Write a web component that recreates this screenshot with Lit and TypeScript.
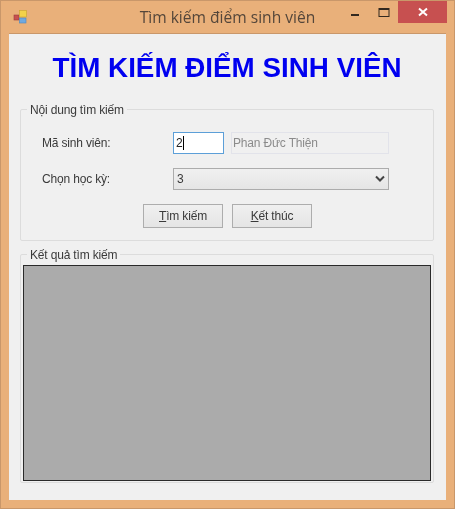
import { LitElement, html, css } from "lit";
import { customElement } from "lit/decorators.js";

@customElement("app-root")
export class AppRoot extends LitElement {
  static styles = css`
    :host {
      display: block;
      width: 455px;
      height: 509px;
      font-family: "Liberation Sans", Arial, sans-serif;
      font-size: 12px;
      letter-spacing: -0.17px;
      color: #3a3a3a;
    }
    .window {
      box-sizing: border-box;
      width: 455px;
      height: 509px;
      background: #e9b07a;
      border: 1px solid #c9976a;
      display: flex;
      flex-direction: column;
      padding: 0 8px 8px 8px;
      filter: blur(0.3px);
    }
    .titlebar {
      height: 32px;
      flex: none;
      position: relative;
    }
    .appicon {
      position: absolute;
      left: 4px;
      top: 8px;
    }
    .caption {
      text-align: center;
      font-family: "Open Sans", "Noto Sans", sans-serif;
      font-size: 15.6px;
      letter-spacing: 0;
      line-height: 18px;
      padding-top: 7px;
      color: #54463a;
    }
    .controls {
      position: absolute;
      right: -1px;
      top: 0;
      display: flex;
      align-items: flex-start;
    }
    .ctl {
      width: 29px;
      height: 24px;
      display: flex;
      align-items: center;
      justify-content: center;
    }
    .close {
      width: 49px;
      height: 22px;
      background: #c75050;
    }
    .client {
      flex: 1;
      background: #f0f0f0;
      border-top: 1px solid #c9976a;
      display: flex;
      flex-direction: column;
      padding: 0 12px 17px 11px;
      min-height: 0;
    }
    h1 {
      margin: 0;
      height: 67px;
      flex: none;
      font-size: 27.8px;
      letter-spacing: 0;
      line-height: 67px;
      font-weight: 700;
      color: #0000f0;
      text-align: center;
      white-space: nowrap;
    }
    fieldset {
      margin: 0;
      padding: 0;
      border: 1px solid #dcdcdc;
      border-radius: 2px;
      min-width: 0;
    }
    legend {
      margin-left: 6px;
      padding: 2px 3px 0;
      line-height: 14px;
    }
    .search {
      height: 140px;
      box-sizing: border-box;
      flex: none;
    }
    .search-body {
      padding: 15px 44px 0 21px;
      display: flex;
      flex-direction: column;
      gap: 14px;
    }
    .row {
      display: flex;
      align-items: center;
      height: 22px;
    }
    .label {
      width: 131px;
      flex: none;
    }
    .input {
      box-sizing: border-box;
      height: 22px;
      line-height: 20px;
      padding-left: 1px;
      border: 1px solid #e2e3ea;
      background: #f0f0f0;
      color: #8b8b8b;
    }
    .code {
      width: 51px;
      padding-left: 2px;
      border: 1px solid #5c9fd8;
      background: #fff;
      color: #222;
      display: flex;
      align-items: center;
    }
    .caret {
      width: 1px;
      height: 14px;
      background: #000;
    }
    .name {
      width: 158px;
      margin-left: 7px;
    }
    .select {
      box-sizing: border-box;
      width: 217px;
      height: 22px;
      border: 1px solid #acacac;
      background: linear-gradient(#f0f0f0, #e5e5e5);
      display: flex;
      align-items: center;
      justify-content: space-between;
      padding: 0 3px 0 3px;
    }
    .buttons {
      display: flex;
      gap: 9px;
      padding-left: 101px;
    }
    button {
      box-sizing: border-box;
      width: 80px;
      height: 24px;
      border: 1px solid #adadad;
      background: linear-gradient(#f0f0f0, #e5e5e5);
      font: inherit;
      letter-spacing: inherit;
      color: inherit;
      padding: 0;
    }
    .results {
      flex: 1;
      margin-top: 5px;
      min-height: 0;
      display: flex;
      flex-direction: column;
    }
    .results-body {
      flex: 1;
      display: flex;
      padding: 3px 2px 1px 2px;
      min-height: 0;
    }
    .grid {
      flex: 1;
      background: #ababab;
      border: 1px solid #2a2a2a;
    }
  `;

  render() {
    return html`
      <div class="window">
        <div class="titlebar">
          <svg class="appicon" width="16" height="16" viewBox="0 0 16 16">
            <rect x="1" y="6" width="5" height="5" fill="#c8504f" stroke="#9c3c3c" stroke-width=".6" />
            <rect x="6.5" y="1.5" width="7" height="6.5" fill="#f3d24a" stroke="#c9a52c" stroke-width=".6" />
            <rect x="6.5" y="9" width="6.5" height="5" fill="#6fa9e0" stroke="#4f86bd" stroke-width=".6" />
          </svg>
          <div class="caption">Tìm kiếm điểm sinh viên</div>
          <div class="controls">
            <div class="ctl">
              <svg width="10" height="10" viewBox="0 0 10 10"><rect x="1" y="6" width="8" height="2" fill="#33291f" /></svg>
            </div>
            <div class="ctl">
              <svg width="12" height="12" viewBox="0 0 12 12">
                <rect x="1" y="1.5" width="10" height="8" fill="none" stroke="#33291f" stroke-width="1" />
                <rect x="1" y="1" width="10" height="2" fill="#33291f" />
              </svg>
            </div>
            <div class="ctl close">
              <svg width="10" height="10" viewBox="0 0 10 10">
                <path d="M1 1.5 L9 8.5 M9 1.5 L1 8.5" stroke="#fff" stroke-width="2" />
              </svg>
            </div>
          </div>
        </div>
        <div class="client">
          <h1>TÌM KIẾM ĐIỂM SINH VIÊN</h1>
          <fieldset class="search">
            <legend>Nội dung tìm kiếm</legend>
            <div class="search-body">
              <div class="row">
                <div class="label">Mã sinh viên:</div>
                <div class="input code">2<span class="caret"></span></div>
                <div class="input name">Phan Đức Thiện</div>
              </div>
              <div class="row">
                <div class="label">Chọn học kỳ:</div>
                <div class="select">
                  <span>3</span>
                  <svg width="10" height="8" viewBox="0 0 10 8">
                    <path d="M1 1.5 L5 5.5 L9 1.5" fill="none" stroke="#444" stroke-width="2" />
                  </svg>
                </div>
              </div>
              <div class="buttons">
                <button><u>T</u>ìm kiếm</button>
                <button><u>K</u>ết thúc</button>
              </div>
            </div>
          </fieldset>
          <fieldset class="results">
            <legend>Kết quả tìm kiếm</legend>
            <div class="results-body">
              <div class="grid"></div>
            </div>
          </fieldset>
        </div>
      </div>
    `;
  }
}
